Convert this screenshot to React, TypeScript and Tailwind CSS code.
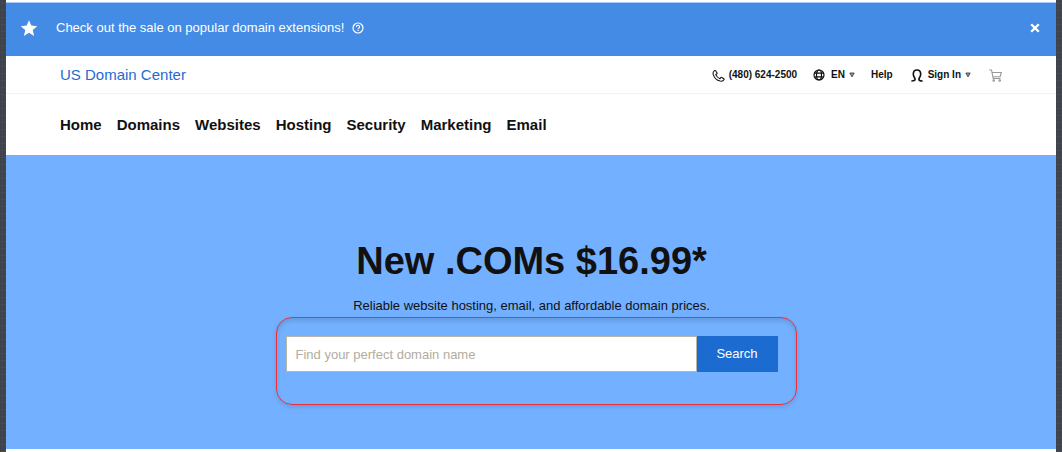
import React from 'react';

const navLinks = ['Home', 'Domains', 'Websites', 'Hosting', 'Security', 'Marketing', 'Email'];

const StarIcon = () => (
  <svg viewBox="0 0 24 24" className="w-[18px] h-[18px] shrink-0" fill="currentColor" aria-hidden="true">
    <path d="M12 1.5l3.1 7.3 7.9.7-6 5.2 1.8 7.8L12 18.4l-6.8 4.1L7 14.7 1 9.5l7.900-.7z" />
  </svg>
);

const HelpIcon = () => (
  <svg viewBox="0 0 12 12" className="w-3 h-3 shrink-0" fill="none" stroke="currentColor" aria-hidden="true">
    <circle cx="6" cy="6" r="5" strokeWidth="1.200" />
    <path d="M4.400 4.900a1.600 1.500 0 1 1 2.500 1.200c-.6.400-.9.600-.9 1.200" strokeWidth="1.100" />
    <path d="M6 8.100v1" strokeWidth="1.200" />
  </svg>
);

const CloseIcon = () => (
  <svg viewBox="0 0 10 10" className="w-[10px] h-[10px]" fill="none" stroke="currentColor" strokeWidth="2.300" aria-hidden="true">
    <path d="M1.200 1.200l7.600 7.600M8.800 1.200L1.200 8.800" />
  </svg>
);

const PhoneIcon = () => (
  <svg viewBox="0 0 24 24" className="w-[13px] h-[13px]" fill="none" stroke="currentColor" strokeWidth="2" strokeLinejoin="round" aria-hidden="true">
    <path d="M4.500 3C2.500 4.500 1.300 6.500 2.200 10 4 16 9 21 15 22.300c3.500.6 6-.3 7.300-2.800.3-.7.100-1.200-.5-1.600L18 15.600c-.8-.4-1.500-.2-2 .5l-1.200 1.700C11.500 16.500 8.200 13.500 6.900 10.300l1.800-1.100c.7-.5.900-1.200.5-1.900L6.700 3.300C6.200 2.600 5.300 2.400 4.500 3z" />
  </svg>
);

const GlobeIcon = () => (
  <svg viewBox="0 0 12 12" className="w-3 h-3" fill="none" stroke="currentColor" strokeWidth="1.200" aria-hidden="true">
    <circle cx="6" cy="6" r="5" />
    <ellipse cx="6" cy="6" rx="2.500" ry="5" />
    <path d="M1.400 4.200h9.200M1.400 7.800h9.200" />
  </svg>
);

const UserIcon = () => (
  <svg viewBox="0 0 12 13" className="w-3 h-[13px]" fill="none" stroke="currentColor" strokeWidth="1.600" aria-hidden="true">
    <path d="M.4 12c2.400 0 3.700-.5 3.700-1.800 0-1.500-1.800-2.300-1.800-5C2.300 2.500 3.700 1 6 1s3.700 1.500 3.700 4.200c0 2.700-1.800 3.500-1.800 5 0 1.300 1.300 1.800 3.700 1.800" />
  </svg>
);

const CartIcon = () => (
  <svg viewBox="0 0 13 13" className="w-[13px] h-[13px]" fill="none" stroke="currentColor" strokeWidth="1.100" aria-hidden="true">
    <path d="M.2 1h2.300l1.700 8.500h7.300M3 3.500h9.300l-1.200 4.200H4" />
    <circle cx="4.700" cy="11.500" r=".8" />
    <circle cx="10.700" cy="11.500" r=".8" />
  </svg>
);

const CaretIcon = () => (
  <svg viewBox="0 0 6 6" className="w-[6px] h-[6px]" aria-hidden="true">
    <path d="M.8 1h4.400L3 4.900z" fill="#999" stroke="#333" strokeWidth=".8" />
  </svg>
);

const App: React.FC = () => {
  return (
    <div className="min-h-screen bg-[#41454e] bg-[repeating-linear-gradient(0deg,#ffffff08_0px,#ffffff08_1px,transparent_1px,transparent_7px),repeating-linear-gradient(90deg,#00000010_0px,#00000010_1px,transparent_1px,transparent_3px)] px-[6px] font-['Liberation_Sans',Arial,sans-serif]">
      <div className="min-h-screen bg-white pt-[2px]">
        {/* Sale banner */}
        <div className="flex items-center h-[54px] pb-1 pl-[14px] pr-4 bg-[#448be5] border-t border-[#a9cbf5] text-white">
          <StarIcon />
          <p className="ml-[18px] text-[13px] leading-4">Check out the sale on popular domain extensions!</p>
          <button type="button" aria-label="Sale details" className="ml-2">
            <HelpIcon />
          </button>
          <button type="button" aria-label="Close" className="ml-auto">
            <CloseIcon />
          </button>
        </div>

        {/* Top bar */}
        <header className="flex items-center justify-between h-[38px] pl-[54px] pr-[54px] border-b border-[#f2f2f2]">
          <a href="#" className="text-[15px] leading-5 text-[#1f6bce]">US Domain Center</a>
          <div className="flex items-center pt-px text-[10px] leading-4 font-bold text-[#111111]">
            <a href="tel:4806242500" className="flex items-center gap-1">
              <PhoneIcon />
              (480) 624-2500
            </a>
            <button type="button" className="flex items-center ml-4">
              <GlobeIcon />
              <span className="ml-[6px] mr-1">EN</span>
              <CaretIcon />
            </button>
            <a href="#" className="ml-4">Help</a>
            <button type="button" className="flex items-center ml-[18px]">
              <UserIcon />
              <span className="ml-[5px] mr-1">Sign In</span>
              <CaretIcon />
            </button>
            <a href="#" aria-label="Cart" className="ml-[18px] text-[#999999]">
              <CartIcon />
            </a>
          </div>
        </header>

        {/* Main navigation */}
        <nav className="flex items-center gap-[15px] h-[61px] pl-[54px] text-[15px] leading-5 font-bold text-[#111111]">
          {navLinks.map((link) => (
            <a key={link} href="#">{link}</a>
          ))}
        </nav>

        {/* Hero */}
        <main className="flex flex-col items-center bg-[#73b0ff] pl-[17px] pr-4 pt-[81px] pb-[77px] text-[#111111]">
          <h1 className="text-[38px] leading-[50px] font-bold">New .COMs $16.99*</h1>
          <p className="mt-3 text-[13px] leading-4">Reliable website hosting, email, and affordable domain prices.</p>
          <form className="relative flex w-full max-w-[492px] mt-[22px]" onSubmit={(e) => e.preventDefault()}>
            <input
              type="text"
              aria-label="Domain name"
              placeholder="Find your perfect domain name"
              className="flex-1 min-w-0 h-9 px-[9px] bg-white border border-[#b5b5a9] text-[13px] leading-4 placeholder:text-[#b1ada0] outline-none"
            />
            <button type="submit" className="w-[81px] h-9 bg-[#1c6bd0] text-white text-[13px] leading-4">
              Search
            </button>
            {/* Highlight frame */}
            <div className="absolute -top-[19px] -bottom-[33px] -left-[10px] -right-[19px] border border-[#ee2f38] rounded-[16px] pointer-events-none shadow-[0_2px_4px_#00000020,inset_0_3px_4px_#00000020]" />
          </form>
        </main>
      </div>
    </div>
  );
};

export default App;
